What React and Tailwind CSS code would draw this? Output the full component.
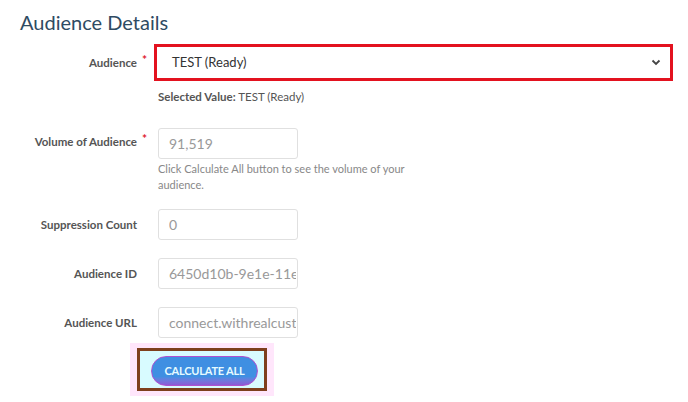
import React from "react";

const fields = [
  { label: "Suppression Count", value: "0", mt: "mt-[16px]" },
  { label: "Audience ID", value: "6450d10b-9e1e-11ef-8c7a", mt: "mt-[18px]" },
  { label: "Audience URL", value: "connect.withrealcustomers.com", mt: "mt-[18px]" },
];

function Label({ text, required }) {
  return (
    <div className="w-[137px] shrink-0 text-right text-[11.5px] leading-[14px]">
      <span className="relative font-bold text-[#555]">
        {text}
        {required && (
          <span className="absolute left-full top-[-3px] ml-[5px] text-[12px] text-[#e02030]">*</span>
        )}
      </span>
    </div>
  );
}

function TextBox({ value }) {
  return (
    <input
      readOnly
      value={value}
      className="block w-[140px] h-[31px] border border-[#e0e0e0] rounded-[3px] pl-[10px] pr-[1px] text-[14px] text-[#999] outline-none bg-white"
    />
  );
}

export default function App() {
  return (
    <div className="w-[688px] h-[402px] bg-white overflow-hidden font-['Lato','Liberation_Sans',sans-serif]">
      {/* Heading */}
      <h1 className="pl-[20px] pt-[8px] text-[20px] leading-[28px] text-[#2f4b63]">Audience Details</h1>

      {/* Audience select */}
      <div className="mt-[8px] flex items-center">
        <Label text="Audience" required />
        <div className="ml-[17px] w-[519px] h-[37px] border-[3px] border-[#e3121f] flex items-center justify-between pl-[15px] pr-[9px]">
          <span className="text-[13px] text-[#333]">TEST (Ready)</span>
          <svg width="10" height="7" viewBox="0 0 10 7" className="text-[#444]">
            <polyline points="1.5,1.5 5,5 8.5,1.5" fill="none" stroke="currentColor" strokeWidth="1.8" />
          </svg>
        </div>
      </div>
      <div className="ml-[158px] mt-[7px] text-[11.5px] text-[#555]">
        <span className="font-bold">Selected Value:</span> TEST (Ready)
      </div>

      {/* Volume */}
      <div className="mt-[23px] flex">
        <div className="pt-[7px]">
          <Label text="Volume of Audience" required />
        </div>
        <div className="ml-[21px]">
          <TextBox value="91,519" />
          <p className="mt-[2px] w-[255px] text-[11px] leading-[16px] text-[#888]">
            Click Calculate All button to see the volume of your audience.
          </p>
        </div>
      </div>

      {fields.map((f) => (
        <div key={f.label} className={`${f.mt} flex items-center`}>
          <Label text={f.label} />
          <div className="ml-[21px]">
            <TextBox value={f.value} />
          </div>
        </div>
      ))}

      {/* Calculate button */}
      <div className="ml-[130px] mt-[5px] inline-block bg-[#ffe6fb] px-[7px] py-[5px]">
        <div className="border-[3px] border-[#7e3f1d] bg-[#d8fbff] pl-[11px] pr-[6px] pt-[5px] pb-[2px]">
          <button className="w-[107px] h-[30px] rounded-full border border-[#b050d0] bg-gradient-to-b from-[#3f8fe2] from-70% to-[#8a5ad6] text-[11px] font-bold text-[#e6fbff] tracking-[-0.2px]">
            CALCULATE ALL
          </button>
        </div>
      </div>
    </div>
  );
}
